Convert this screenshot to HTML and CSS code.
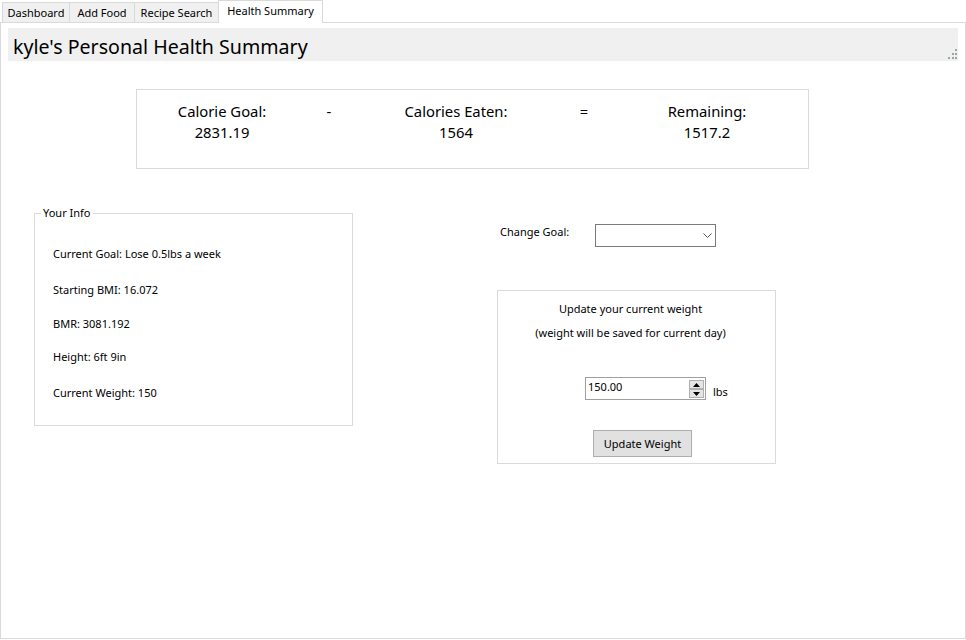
FILE: index.html
```html
<!DOCTYPE html>
<html>
<head>
  <title>Health Summary</title>
  <meta charset="UTF-8">
  <link rel="stylesheet" href="styles.css">
</head>
<body>
  <div class="tabs">
    <div class="tab t-dash">Dashboard</div>
    <div class="tab t-food">Add Food</div>
    <div class="tab t-recipe">Recipe Search</div>
    <div class="tab t-health active">Health Summary</div>
  </div>

  <div class="page">
    <div class="title-bar">
      <h1>kyle's Personal Health Summary</h1>
      <svg class="grip" width="12" height="12" viewBox="0 0 12 12">
        <rect x="10" y="1" width="2" height="2" fill="#9aa5a5"/>
        <rect x="7" y="5" width="2" height="2" fill="#9aa5a5"/>
        <rect x="10" y="5" width="2" height="2" fill="#9aa5a5"/>
        <rect x="3" y="9" width="2" height="2" fill="#9aa5a5"/>
        <rect x="7" y="9" width="2" height="2" fill="#9aa5a5"/>
        <rect x="10" y="9" width="2" height="2" fill="#9aa5a5"/>
      </svg>
    </div>

    <div class="calorie-box">
      <div class="cell c-goal"><div>Calorie Goal:</div><div>2831.19</div></div>
      <div class="cell c-op1"><div>-</div></div>
      <div class="cell c-eaten"><div>Calories Eaten:</div><div>1564</div></div>
      <div class="cell c-op2"><div>=</div></div>
      <div class="cell c-left"><div>Remaining:</div><div>1517.2</div></div>
    </div>

    <div class="lower">
      <fieldset class="info">
        <legend>Your Info</legend>
        <p class="info-row r1">Current Goal: Lose 0.5lbs a week</p>
        <p class="info-row r2">Starting BMI: 16.072</p>
        <p class="info-row r3">BMR: 3081.192</p>
        <p class="info-row r4">Height: 6ft 9in</p>
        <p class="info-row r5">Current Weight: 150</p>
      </fieldset>

      <div class="right">
        <div class="goal-row">
          <span class="goal-label">Change Goal:</span>
          <div class="select">
            <svg width="9" height="6" viewBox="0 0 9 6"><path d="M0.5 0.5 L4.5 4.5 L8.5 0.5" fill="none" stroke="#555" stroke-width="1"/></svg>
          </div>
        </div>

        <div class="weight-box">
          <p class="w-line">Update your current weight</p>
          <p class="w-line w-sub">(weight will be saved for current day)</p>
          <div class="weight-row">
            <div class="num">
              <span>150.00</span>
              <div class="spin">
                <div class="spin-btn"><svg width="7" height="4" viewBox="0 0 7 4"><path d="M0 4 L3.5 0 L7 4 Z" fill="#000"/></svg></div>
                <div class="spin-btn"><svg width="7" height="4" viewBox="0 0 7 4"><path d="M0 0 L3.5 4 L7 0 Z" fill="#000"/></svg></div>
              </div>
            </div>
            <span class="unit">lbs</span>
          </div>
          <button class="update-btn">Update Weight</button>
        </div>
      </div>
    </div>
  </div>
</body>
</html>
```

FILE: styles.css
```css
* {
  margin: 0;
  padding: 0;
  box-sizing: border-box;
}

body {
  font-family: 'Noto Sans', 'Open Sans', sans-serif;
  font-size: 11px;
  color: #000;
  background: #fff;
  width: 966px;
  height: 640px;
  overflow: hidden;
}

/* Tab strip */
.tabs {
  display: flex;
  align-items: flex-end;
  height: 22px;
  padding-left: 2px;
}

.tab {
  height: 20px;
  line-height: 19px;
  text-align: center;
  background: #f0f0f0;
  border: 1px solid #d9d9d9;
  border-bottom: none;
  margin-right: -1px;
  white-space: nowrap;
}

.t-dash { width: 68px; }
.t-food { width: 66px; }
.t-recipe { width: 85px; }
.t-health { width: 105px; }

.tab.active {
  height: 23px;
  line-height: 19px;
  background: #fff;
  margin-bottom: -1px;
  position: relative;
  z-index: 1;
}

/* Page */
.page {
  height: 617px;
  border: 1px solid #dadada;
  padding: 5px 7px 0 7px;
}

.title-bar {
  position: relative;
  height: 33px;
  background: #f0f0f0;
}

.title-bar h1 {
  font-size: 19.6px;
  font-weight: 400;
  line-height: 33px;
  padding: 2px 0 0 5px;
}

.grip {
  position: absolute;
  right: 1px;
  bottom: 1px;
}

/* Calories */
.calorie-box {
  display: flex;
  width: 673px;
  height: 80px;
  margin: 28px 0 0 128px;
  border: 1px solid #dadada;
  padding-top: 11px;
  font-size: 14.8px;
  line-height: 21px;
}

.cell {
  text-align: center;
}

.c-goal { width: 170px; }
.c-op1 { width: 44px; }
.c-eaten { width: 210px; }
.c-op2 { width: 46px; }
.c-left { width: 200px; }

/* Lower area */
.lower {
  display: flex;
  align-items: flex-start;
}

.info {
  width: 319px;
  margin: 36px 0 0 26px;
  border: 1px solid #dadada;
  padding: 0 0 24px 0;
}

.info legend {
  margin-left: 6px;
  padding: 0 2px;
  line-height: 16px;
}

.info-row {
  line-height: 16px;
  padding-left: 18px;
}

.r1 { margin-top: 25px; }
.r2 { margin-top: 20px; }
.r3 { margin-top: 18px; }
.r4 { margin-top: 17px; }
.r5 { margin-top: 20px; }

.right {
  margin: 55px 0 0 144px;
}

.goal-row {
  display: flex;
  align-items: flex-start;
}

.goal-label {
  width: 98px;
  padding-left: 3px;
  line-height: 16px;
}

.select {
  width: 121px;
  height: 23px;
  border: 1px solid #7a7a7a;
  display: flex;
  justify-content: flex-end;
  align-items: center;
  padding-right: 3px;
}

.weight-box {
  width: 279px;
  height: 174px;
  margin-top: 43px;
  border: 1px solid #dadada;
  padding: 10px 12px 0 0;
  text-align: center;
}

.w-line {
  line-height: 16px;
}

.w-sub {
  margin-top: 8px;
}

.weight-row {
  display: flex;
  align-items: flex-end;
  margin: 36px 0 0 87px;
}

.num {
  width: 121px;
  height: 23px;
  border: 1px solid #a0a0a0;
  display: flex;
  justify-content: space-between;
  padding: 1px 1px 0 2px;
  line-height: 16px;
  text-align: left;
}

.spin {
  display: flex;
  flex-direction: column;
  padding-top: 1px;
}

.spin-btn {
  width: 15px;
  height: 9px;
  background: #e5e5e5;
  border: 1px solid #b0b0b0;
  display: flex;
  align-items: center;
  justify-content: center;
}

.unit {
  margin-left: 7px;
  line-height: 16px;
}

.update-btn {
  display: block;
  width: 99px;
  height: 27px;
  margin: 30px 0 0 95px;
  background: #e1e1e1;
  border: 1px solid #adadad;
  font-family: inherit;
  font-size: 11px;
  color: #000;
}
```
